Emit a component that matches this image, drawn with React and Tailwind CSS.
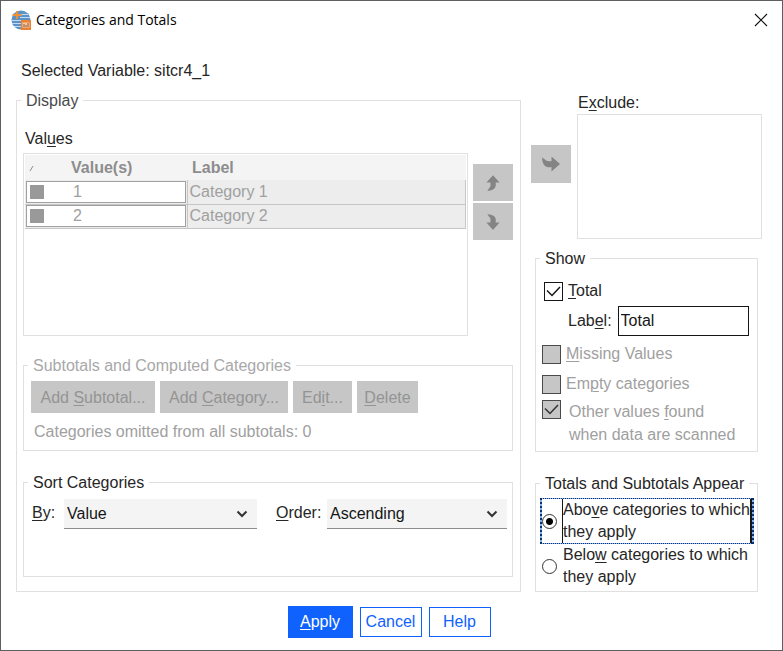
import React from "react";

const Key = ({ children }) => (
  <span className="underline decoration-1 underline-offset-2">{children}</span>
);

function Group({ title, titleClass = "", className = "", bodyClass = "", disabled, children }) {
  return (
    <fieldset disabled={disabled} className={`min-w-0 border border-[#e0e0e0] ${className}`}>
      <legend className={`ml-1 px-[5px] pt-[2px] leading-5 ${titleClass}`}>{title}</legend>
      <div className={bodyClass}>{children}</div>
    </fieldset>
  );
}

function CheckBox({ id, ...props }) {
  return (
    <span className="grid size-[19px] shrink-0">
      <input
        id={id}
        type="checkbox"
        className="peer col-start-1 row-start-1 size-[19px] appearance-none border border-[#161616] bg-white disabled:border-[#4a4a4a] disabled:bg-[#c6c6c6]"
        {...props}
      />
      <svg
        viewBox="0 0 19 19"
        className="pointer-events-none invisible col-start-1 row-start-1 size-[19px] text-[#161616] peer-checked:visible peer-disabled:text-[#333]"
        fill="none"
        stroke="currentColor"
        strokeWidth="1.5"
      >
        <path d="M3 8.5l5 5L16 5" />
      </svg>
    </span>
  );
}

function DropDown({ id, className, options }) {
  return (
    <span className={`grid ${className}`}>
      <select
        id={id}
        className="col-start-1 row-start-1 h-[30px] w-full appearance-none border-b border-[#8d8d8d] bg-[#f4f4f4] pl-[3px] text-[#161616]"
      >
        {options.map((o) => (
          <option key={o}>{o}</option>
        ))}
      </select>
      <svg
        viewBox="0 0 12 8"
        className="pointer-events-none col-start-1 row-start-1 mr-[9px] h-2 w-3 self-center justify-self-end"
        fill="none"
        stroke="#333"
        strokeWidth="2"
      >
        <path d="M1.500 1.500L6 6l4.500-4.500" />
      </svg>
    </span>
  );
}

function Radio({ id, ...props }) {
  return (
    <input
      id={id}
      type="radio"
      name="position"
      className="size-[15px] shrink-0 appearance-none rounded-full border border-[#333] bg-white checked:bg-[radial-gradient(circle,#000_0_3px,#fff_4px)]"
      {...props}
    />
  );
}

function ArrowButton({ label, icon, className }) {
  return (
    <button
      type="button"
      disabled
      aria-label={label}
      className={`flex w-10 items-center justify-center bg-[#c6c6c6] ${className}`}
    >
      <svg viewBox="0 0 18 16" className={icon} fill="#848484">
        <path d="M0 1.500L3 3.500C4 5 6 5.500 9.500 5V.5L18 8l-8.500 7.500V11C5 11.800.5 11 0 1.500z" />
      </svg>
    </button>
  );
}

const rows = [
  { value: "1", label: "Category 1" },
  { value: "2", label: "Category 2" },
];

const grayButton = "h-8 bg-[#c6c6c6] pt-px text-center text-[#949494]";
const lineButton = "h-[30px] w-[62px] border border-[#0f62fe] bg-white text-[#0f62fe]";

export default function App() {
  return (
    <div className="flex min-h-screen flex-col border border-[#5f5f63] bg-white font-['Liberation_Sans',Arial,sans-serif] text-base leading-5 text-[#262626]">
      <header className="flex h-[37px] items-center gap-[5px] pl-[10px] pr-[14px]">
        <svg viewBox="0 0 20 20" className="size-5">
          <circle cx="10" cy="10" r="9.500" fill="#5b93c6" />
          <path d="M10 4.500h7M9 7.500h10M1 10.500h18M1 13.500h9M3 16.500h7" stroke="#c2dbf0" strokeWidth="1.200" />
          <path d="M6 1v8M1.500 5h9" stroke="#f2913a" strokeWidth="1.800" />
          <rect x="10" y="10" width="10" height="10" fill="#ea8235" />
          <rect x="11.500" y="12.500" width="7" height="5" fill="#f7c9a2" />
          <path d="M13 17v-3M15 17v-2M17 17v-4" stroke="#8a5a3c" />
        </svg>
        <h1 className="grow font-['Open_Sans',sans-serif] text-sm text-black">Categories and Totals</h1>
        <button type="button" aria-label="Close">
          <svg viewBox="0 0 14 14" className="size-[14px]" stroke="#111" strokeWidth="1.100">
            <path d="M1 1l12 12M13 1L1 13" />
          </svg>
        </button>
      </header>

      <main className="flex grow flex-col pb-3 pl-[15px] pr-5 pt-[23px]">
        <p className="pl-[5px]">Selected Variable: sitcr4_1</p>

        <div className="mt-2 grid grid-cols-[minmax(0,1fr)_231px] gap-x-[10px]">
          <Group title="Display" titleClass="text-[#4a4a4a]" bodyClass="pl-[6px] pr-[7px] pb-[14px]">
            <p id="values" className="pl-[2px] pt-[18px]">
              Val<Key>u</Key>es
            </p>
            <div className="mt-1 flex gap-[5px]">
              <div className="h-[183px] grow border border-[#e0e0e0] p-px">
                <table aria-labelledby="values" className="w-full table-fixed border-collapse text-[#a0a0a0]">
                  <thead>
                    <tr className="h-[25px] bg-[#f4f4f4] text-left text-[#8d8d8d]">
                      <th className="w-[162px] p-0">
                        <span className="flex items-center">
                          <svg viewBox="0 0 8 8" className="ml-1 size-2" stroke="#8d8d8d" fill="none">
                            <path d="M1 7l3-5" />
                          </svg>
                          <span className="pl-[34px]">Value(s)</span>
                        </span>
                      </th>
                      <th className="p-0 pl-[5px]">Label</th>
                    </tr>
                  </thead>
                  <tbody>
                    {rows.map((r) => (
                      <tr key={r.value} className="h-6 border-b border-[#c6c6c6] bg-[#ededed]">
                        <td className="border-r border-[#c6c6c6] p-0">
                          <span className="mx-px flex h-[22px] items-center border border-[#a0a0a0] bg-white pl-[3px]">
                            <span className="size-[14px] bg-[#999]" />
                            <span className="pl-[29px]">{r.value}</span>
                          </span>
                        </td>
                        <td className="border-r border-[#c6c6c6] p-0 pl-[2px]">{r.label}</td>
                      </tr>
                    ))}
                  </tbody>
                </table>
              </div>
              <div className="flex w-10 flex-col gap-[2px] pt-[11px]">
                <ArrowButton label="Move up" icon="h-[14px] w-4 -rotate-90" className="h-[37px]" />
                <ArrowButton label="Move down" icon="h-[14px] w-4 rotate-90 -scale-y-100" className="h-[37px]" />
              </div>
            </div>

            <Group
              disabled
              title="Subtotals and Computed Categories"
              titleClass="text-[#a8a8a8]"
              className="mt-[18px]"
              bodyClass="px-[7px] pb-2 pt-[5px]"
            >
              <div className="flex gap-[5px]">
                <button type="button" className={`w-[124px] ${grayButton}`}>
                  Add <Key>S</Key>ubtotal...
                </button>
                <button type="button" className={`w-[128px] ${grayButton}`}>
                  Add <Key>C</Key>ategory...
                </button>
                <button type="button" className={`w-[59px] ${grayButton}`}>
                  Ed<Key>i</Key>t...
                </button>
                <button type="button" className={`w-[61px] ${grayButton}`}>
                  <Key>D</Key>elete
                </button>
              </div>
              <p className="mt-[9px] pl-[3px] text-[#a0a0a0]">Categories omitted from all subtotals: 0</p>
            </Group>

            <Group title="Sort Categories" className="mt-5" bodyClass="flex pb-[47px] pl-2 pr-[5px] pt-[6px]">
              <label htmlFor="by" className="w-8 pt-1">
                <Key>B</Key>y:
              </label>
              <DropDown id="by" className="grow" options={["Value", "Label", "Count"]} />
              <label htmlFor="order" className="ml-[19px] w-[51px] pt-1">
                <Key>O</Key>rder:
              </label>
              <DropDown id="order" className="w-[180px]" options={["Ascending", "Descending"]} />
            </Group>
          </Group>

          <div className="flex flex-col">
            <div className="flex gap-[6px]">
              <ArrowButton label="Exclude value" icon="h-4 w-[18px]" className="mt-14 h-[38px]" />
              <div className="grow pt-1">
                <label htmlFor="exclude" className="pl-px">
                  E<Key>x</Key>clude:
                </label>
                <select
                  id="exclude"
                  size="5"
                  className="mt-px block h-[125px] w-full appearance-none border border-[#e0e0e0] bg-white"
                />
              </div>
            </div>

            <Group title="Show" className="mx-1 mt-2" bodyClass="pb-[5px] pl-[6px] pr-2 pt-3">
              <div className="flex items-center gap-[5px] pl-[2px]">
                <CheckBox id="total" defaultChecked />
                <label htmlFor="total">
                  <Key>T</Key>otal
                </label>
              </div>
              <div className="mt-[5px] flex items-center gap-[6px] pl-[26px]">
                <label htmlFor="total-label">
                  Lab<Key>e</Key>l:
                </label>
                <input
                  id="total-label"
                  type="text"
                  defaultValue="Total"
                  className="h-[30px] w-0 grow border border-[#161616] px-[2px] text-[#161616]"
                />
              </div>
              <div className="mt-2 flex items-center gap-[5px] text-[#a0a0a0]">
                <CheckBox id="missing" disabled />
                <label htmlFor="missing">
                  <Key>M</Key>issing Values
                </label>
              </div>
              <div className="mt-[10px] flex items-center gap-[5px] text-[#a0a0a0]">
                <CheckBox id="empty" disabled />
                <label htmlFor="empty">
                  Em<Key>p</Key>ty categories
                </label>
              </div>
              <div className="mt-[6px] flex gap-2 text-[#a0a0a0]">
                <CheckBox id="other" disabled defaultChecked />
                <label htmlFor="other" className="leading-[23px]">
                  Other values <Key>f</Key>ound
                  <br />
                  when data are scanned
                </label>
              </div>
            </Group>

            <Group
              title="Totals and Subtotals Appear"
              className="mx-1 mt-5 grow whitespace-nowrap"
              bodyClass="pl-1 pr-[3px] pt-1"
            >
              <div className="border-x-2 border-y border-dotted border-[#10306a] bg-[#7fb2f0]">
                <div className="flex items-center gap-[5px] bg-white">
                  <Radio id="above" defaultChecked />
                  <label htmlFor="above" className="min-w-0 grow border-l border-r-2 border-[#161616] leading-[22px]">
                    Abo<Key>v</Key>e categories to which
                    <br />
                    they apply
                  </label>
                </div>
              </div>
              <div className="flex items-center gap-[6px] pl-[2px]">
                <Radio id="below" />
                <label htmlFor="below" className="leading-[22px]">
                  Belo<Key>w</Key> categories to which
                  <br />
                  they apply
                </label>
              </div>
            </Group>
          </div>
        </div>

        <footer className="mt-[14px] flex items-center justify-center gap-[7px]">
          <button type="button" className="h-8 w-[65px] bg-[#0f62fe] text-white">
            <Key>A</Key>pply
          </button>
          <button type="button" className={lineButton}>
            Cancel
          </button>
          <button type="button" className={lineButton}>
            Help
          </button>
        </footer>
      </main>
    </div>
  );
}
